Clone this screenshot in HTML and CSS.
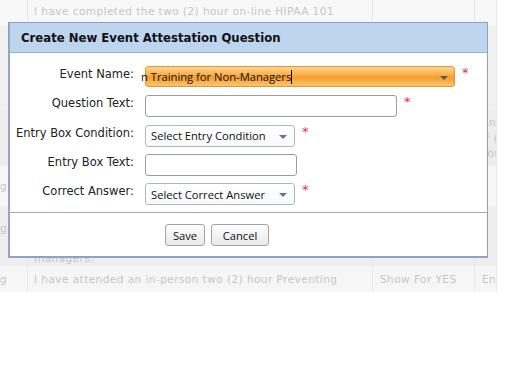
FILE: index.html
```html
<!DOCTYPE html>
<html>
<head>
<meta charset="utf-8">
<link rel="stylesheet" href="styles.css">
</head>
<body>
<div class="page">
  <div class="row r1">
    <div class="c c1"></div>
    <div class="c c2"><span class="line">I have completed the two (2) hour on-line HIPAA 101</span></div>
    <div class="c c3"></div>
    <div class="c c4"></div>
  </div>
  <div class="row r2">
    <div class="c c1"></div><div class="c c2"></div><div class="c c3"></div><div class="c c4"></div>
  </div>
  <div class="row r3">
    <div class="c c1"></div><div class="c c2"></div><div class="c c3"></div>
    <div class="c c4 multi"><span>Ent</span><span>If (</span><span>You</span></div>
  </div>
  <div class="row r4">
    <div class="c c1 mid">g</div><div class="c c2"></div><div class="c c3"></div><div class="c c4"></div>
  </div>
  <div class="row r5">
    <div class="c c1 g2">g</div>
    <div class="c c2 bottom">managers.</div>
    <div class="c c3"></div><div class="c c4"></div>
  </div>
  <div class="row r6">
    <div class="c c1 mid">g</div>
    <div class="c c2 mid">I have attended an in-person two (2) hour Preventing</div>
    <div class="c c3 mid">Show For YES</div>
    <div class="c c4 mid">Ent</div>
  </div>
</div>

<div class="dialog">
  <div class="dlg-head">Create New Event Attestation Question</div>
  <div class="dlg-body">
    <div class="form">
      <label class="lbl">Event Name:</label>
      <div class="field">
        <div class="select hot wide"><span class="sel-text cut">n Training for Non-Managers<span class="caret"></span></span><span class="arrow dark"></span></div>
        <span class="req">*</span>
      </div>

      <label class="lbl">Question Text:</label>
      <div class="field">
        <div class="input q"></div>
        <span class="req">*</span>
      </div>

      <label class="lbl">Entry Box Condition:</label>
      <div class="field">
        <div class="select small"><span class="sel-text">Select Entry Condition</span><span class="arrow"></span></div>
        <span class="req">*</span>
      </div>

      <label class="lbl">Entry Box Text:</label>
      <div class="field">
        <div class="input e"></div>
      </div>

      <label class="lbl">Correct Answer:</label>
      <div class="field">
        <div class="select small"><span class="sel-text">Select Correct Answer</span><span class="arrow"></span></div>
        <span class="req">*</span>
      </div>
    </div>
  </div>
  <div class="dlg-buttons">
    <button class="btn save">Save</button>
    <button class="btn cancel">Cancel</button>
  </div>
</div>
</body>
</html>
```

FILE: styles.css
```css
html, body {
  margin: 0;
  padding: 0;
  background: #ffffff;
}
body {
  width: 512px;
  height: 384px;
  overflow: hidden;
  position: relative;
  font-family: "DejaVu Sans", Verdana, sans-serif;
}

/* background grid (faded behind modal) */
.page {
  width: 497px;
  display: flex;
  flex-direction: column;
  font-size: 10.5px;
  letter-spacing: 0.45px;
  color: #c6c6c6;
}
.row {
  display: grid;
  grid-template-columns: 28px 345px 102px 22px;
}
.c {
  border-right: 1px solid #e8e8e8;
  overflow: hidden;
  white-space: nowrap;
  box-sizing: border-box;
}
.c4 { border-right: 1px solid #eaeaea; }
.c2 { padding-left: 6px; }
.c3 { padding-left: 7px; }
.c4 { padding-left: 7px; }
.c1 { padding-left: 0; }

.r1 { height: 26px; background: #f8f8f8; }
.r1 .c2 { padding-top: 5px; }
.r2 { height: 84px; background: #f0f0f0; }
.r3 { height: 56px; background: #ededed; }
.r4 { height: 40px; background: #f7f7f7; }
.r5 { height: 60px; background: #eeeeee; }
.r6 { height: 26px; background: #f6f6f6; }

.multi {
  display: flex;
  flex-direction: column;
  padding-top: 5px;
  line-height: 15.5px;
}
.mid {
  display: flex;
  align-items: center;
}
.c1.mid { justify-content: flex-start; }
.g2 { padding-top: 16px; }
.bottom {
  display: flex;
  align-items: flex-end;
  padding-bottom: 2px;
}

/* dialog */
.dialog {
  position: absolute;
  left: 8px;
  top: 22px;
  width: 480px;
  height: 236px;
  box-sizing: border-box;
  border: 1px solid #8ea2bf;
  border-left: 2px solid #94a6c0;
  border-bottom: 2px solid #8aa3c6;
  background: #ffffff;
  display: flex;
  flex-direction: column;
}
.dlg-head {
  height: 29px;
  background: #bdd5ee;
  border-bottom: 1px solid #9bb0cb;
  font-weight: bold;
  font-size: 11.7px;
  color: #111111;
  padding-left: 11px;
  display: flex;
  align-items: center;
  flex-shrink: 0;
}
.dlg-body {
  flex-shrink: 0;
  height: 160px;
  border-bottom: 1px solid #a7a7a7;
  box-sizing: border-box;
  padding-top: 13px;
}
.form {
  display: grid;
  grid-template-columns: 124px 1fr;
  column-gap: 11px;
  grid-auto-rows: 22px;
  row-gap: 7.25px;
}
.lbl {
  font-size: 11.5px;
  color: #222222;
  text-align: right;
  padding-top: 1px;
  white-space: nowrap;
}
.field {
  display: flex;
  align-items: flex-start;
}
.req {
  color: #e2323a;
  font-size: 13px;
  line-height: 1;
  margin-left: 7px;
  margin-top: 0px;
  font-family: "DejaVu Sans", sans-serif;
}

.select, .input {
  box-sizing: border-box;
  height: 22px;
  border-radius: 3px;
  position: relative;
  display: flex;
  align-items: center;
  font-family: "Open Sans", "Noto Sans", sans-serif;
  font-size: 11.2px;
  color: #111111;
}
.select {
  border: 1px solid #a9b9cd;
  background: linear-gradient(#ffffff, #f7f9fb);
  padding-left: 5px;
}
.select.small { width: 150px; }
.select.wide {
  width: 310px;
  height: 21px;
  padding-left: 0;
  border: 1px solid #d49a3a;
  background: linear-gradient(#fed593 0%, #fbb454 35%, #f79e2c 55%, #fab354 80%, #fcc46c 100%);
}
.sel-text {
  white-space: nowrap;
  overflow: hidden;
}
.cut {
  margin-left: -5px;
  display: flex;
  align-items: center;
}
.caret {
  display: inline-block;
  width: 1px;
  height: 14px;
  background: #000000;
  margin-left: 0;
}
.arrow {
  position: absolute;
  right: 7px;
  top: 9px;
  width: 0;
  height: 0;
  border-left: 4px solid transparent;
  border-right: 4px solid transparent;
  border-top: 4px solid #5d7598;
}
.arrow.dark {
  right: 6px;
  border-top-color: #5e5a58;
}
.input {
  border: 1px solid #9c9c9c;
  background: #ffffff;
}
.input.q { width: 252px; }
.input.e { width: 152px; }

.dlg-buttons {
  flex: 1;
  display: flex;
  align-items: flex-start;
  padding-top: 11px;
  padding-left: 155px;
  gap: 6px;
}
.btn {
  height: 22px;
  box-sizing: border-box;
  border: 1px solid #a3a3a3;
  border-radius: 3px;
  background: linear-gradient(#fdfdfd, #e9e9e9);
  font-family: "Open Sans", "Noto Sans", sans-serif;
  font-size: 11.2px;
  color: #111111;
  padding: 0;
  margin: 0;
}
.btn.save { width: 40px; }
.btn.cancel { width: 58px; }
```
